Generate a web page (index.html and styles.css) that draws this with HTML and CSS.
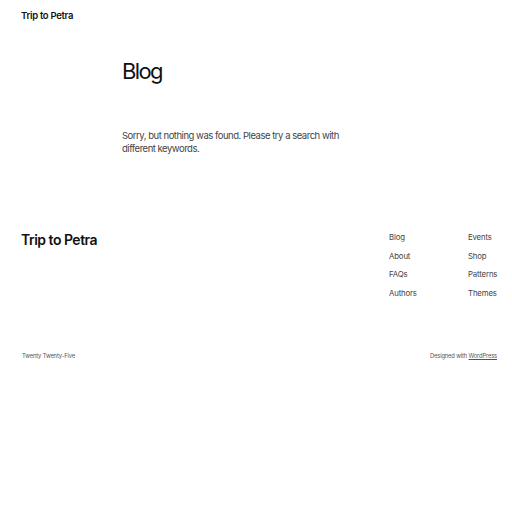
FILE: index.html
```
<!DOCTYPE html>
<html lang="en">
<head>
<meta charset="utf-8">
<title>Blog – Trip to Petra</title>
<link rel="stylesheet" href="styles.css">
</head>
<body>
<header class="site-header">
  <a class="site-title" href="#">Trip to Petra</a>
</header>
<main class="main">
  <h1 class="page-title">Blog</h1>
  <p class="no-results">Sorry, but nothing was found. Please try a search with different keywords.</p>
</main>
<footer class="site-footer">
  <div class="footer-top">
    <a class="footer-title" href="#">Trip to Petra</a>
    <nav class="footer-nav">
      <ul class="nav-col">
        <li><a href="#">Blog</a></li>
        <li><a href="#">About</a></li>
        <li><a href="#">FAQs</a></li>
        <li><a href="#">Authors</a></li>
      </ul>
      <ul class="nav-col">
        <li><a href="#">Events</a></li>
        <li><a href="#">Shop</a></li>
        <li><a href="#">Patterns</a></li>
        <li><a href="#">Themes</a></li>
      </ul>
    </nav>
  </div>
  <div class="footer-bottom">
    <span>Twenty Twenty-Five</span>
    <span>Designed with <a class="wp" href="#">WordPress</a></span>
  </div>
</footer>
</body>
</html>
```
FILE: styles.css
```
* { box-sizing: border-box; }
html, body { margin: 0; padding: 0; background: #fff; }
body {
  font-family: Inter, "Noto Sans", sans-serif;
  color: #111;
  width: 512px;
}
a { color: inherit; text-decoration: none; }
ul { list-style: none; margin: 0; padding: 0; }

.site-header {
  padding: 3px 21px 0;
  height: 30px;
}
.site-title {
  font-size: 9.5px;
  font-weight: 600;
  letter-spacing: -0.3px;
  line-height: 12px;
}

.main {
  padding: 28px 0 0 122px;
  height: 200px;
}
.page-title {
  margin: 0;
  font-size: 22px;
  font-weight: 400;
  letter-spacing: -1.6px;
  line-height: 26px;
}
.no-results {
  margin: 45px 0 0;
  width: 230px;
  font-size: 9.5px;
  line-height: 13px;
  color: #444;
  letter-spacing: -0.48px;
}

.site-footer {
  padding: 0 15px 0 21px;
}
.footer-top {
  display: flex;
  justify-content: space-between;
  height: 122px;
}
.footer-title {
  margin-top: 1px;
  font-size: 14px;
  font-weight: 600;
  letter-spacing: -0.5px;
  line-height: 17px;
}
.footer-nav {
  display: flex;
  padding-top: 2px;
}
.nav-col {
  display: flex;
  flex-direction: column;
  gap: 8.5px;
  width: 79px;
}
.nav-col:last-child { width: 29px; }
.nav-col li {
  font-size: 7.8px;
  line-height: 10px;
  color: #444;
  letter-spacing: -0.15px;
  white-space: nowrap;
}
.footer-bottom {
  display: flex;
  justify-content: space-between;
  font-size: 5.8px;
  line-height: 8px;
  color: #555;
  letter-spacing: -0.15px;
  padding-left: 1px;
}
.wp { text-decoration: underline; }
```
